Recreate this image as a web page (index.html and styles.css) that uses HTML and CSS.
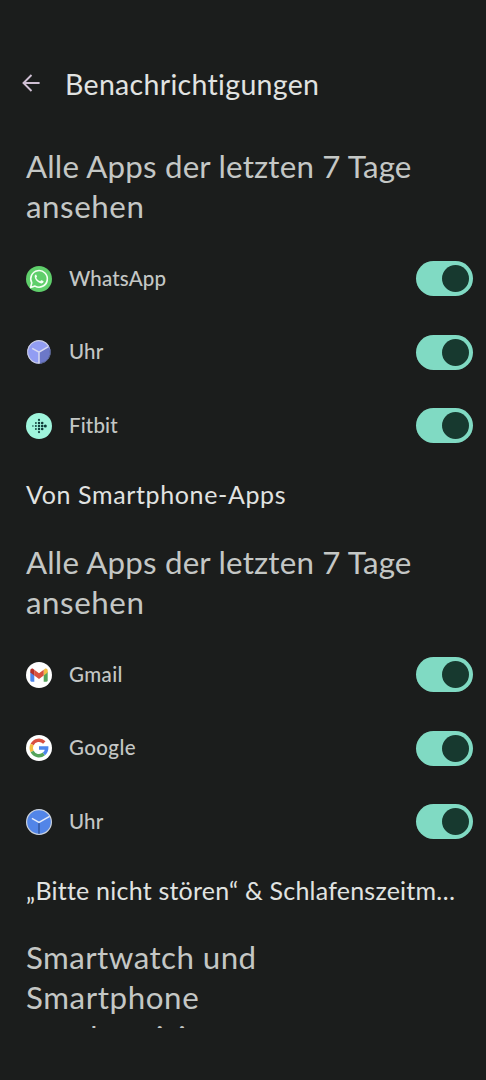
FILE: index.html
```html
<!DOCTYPE html>
<html lang="de">
<head>
    <meta charset="UTF-8">
    <meta name="viewport" content="width=device-width, initial-scale=1.0">
    <title>Benachrichtigungen</title>
    <link rel="stylesheet" href="styles.css">
</head>
<body>
    <header class="topbar">
        <svg class="back" viewBox="0 0 18 18">
            <path d="M17.6 9H1.5M9.5 1l-8 8 8 8" fill="none" stroke="#cfbfd3" stroke-width="1.9"/>
        </svg>
        <h1>Benachrichtigungen</h1>
    </header>

    <main class="content">
        <a class="link"><span class="line-all">Alle Apps der letzten 7 Tage</span> <span class="line-see">ansehen</span></a>
        <ul class="apps">
            <li class="app">
                <svg class="icon" viewBox="0 0 26 26">
                    <circle cx="13" cy="13" r="13" fill="#5fcf6b"/>
                    <path d="M4.6 21.4l1.2-4.5a8.3 8.3 0 1 1 3.2 3.2z" fill="none" stroke="#f4fff4" stroke-width="1.6" stroke-linejoin="round"/>
                    <path d="M9.9 8.5c-.7.3-1.3 1-1.2 2 .2 3.3 3.3 6.4 6.5 6.9 1 .1 2-.4 2.3-1.3.2-.5.1-.9-.2-1.1l-1.7-.8c-.4-.2-.6 0-1.2.8-.2.3-.5.2-.8.1-1.5-.7-2.5-1.6-3.2-3-.1-.3 0-.4.5-1 .2-.3.2-.4.1-.7l-.7-1.6c-.1-.3-.2-.3-.4-.3z" fill="#f4fff4"/>
                </svg>
                <span class="name">WhatsApp</span>
                <span class="switch"></span>
            </li>
            <li class="app">
                <svg class="icon" viewBox="0 0 26 26">
                    <circle cx="13" cy="13" r="11.6" fill="#929df3"/>
                    <path d="M13 13.2l9.8-5.5a11.4 11.4 0 0 1-9.8 16.7z" fill="#6c78c8"/>
                    <path d="M24.2 10.5a11.6 11.6 0 0 1-9.5 13.9" fill="none" stroke="#525d85" stroke-width="1"/>
                    <path d="M13.5 24.2A11.3 11.3 0 1 1 22.5 7" fill="none" stroke="#cbcde2" stroke-width="1.2"/>
                    <path d="M6.2 9.3l6.8 3.9 9.5-5.5M13 13.2v11" fill="none" stroke="#d8daf1" stroke-width="1.5"/>
                </svg>
                <span class="name">Uhr</span>
                <span class="switch"></span>
            </li>
            <li class="app">
                <svg class="icon" viewBox="0 0 26 26">
                    <circle cx="13" cy="13" r="13" fill="#9ff5dc"/>
                    <g fill="#0e3b39">
                        <circle cx="6.9" cy="13" r=".8"/>
                        <circle cx="9.9" cy="10" r=".9"/>
                        <circle cx="9.9" cy="13" r="1"/>
                        <circle cx="9.9" cy="16" r=".9"/>
                        <circle cx="13" cy="6.9" r="1.1"/>
                        <circle cx="13" cy="10" r="1.2"/>
                        <circle cx="13" cy="13" r="1.2"/>
                        <circle cx="13" cy="16" r="1.2"/>
                        <circle cx="13" cy="19.1" r="1.1"/>
                        <circle cx="16.2" cy="10" r="1.3"/>
                        <circle cx="16.2" cy="13" r="1.3"/>
                        <circle cx="16.2" cy="16" r="1.3"/>
                        <circle cx="19.3" cy="13" r="1.5"/>
                    </g>
                </svg>
                <span class="name">Fitbit</span>
                <span class="switch"></span>
            </li>
        </ul>

        <h2 class="phone-apps">Von Smartphone-Apps</h2>
        <a class="link"><span class="line-all">Alle Apps der letzten 7 Tage</span> <span class="line-see">ansehen</span></a>
        <ul class="apps">
            <li class="app">
                <svg class="icon" viewBox="0 0 26 26">
                    <circle cx="13" cy="13" r="13" fill="#fff"/>
                    <path d="M4.3 9.5l4 3v7.2H5.5c-.7 0-1.2-.5-1.2-1.2z" fill="#4f86ec"/>
                    <path d="M17.7 12.5l4-3v9c0 .7-.5 1.2-1.2 1.2h-2.8z" fill="#55a45b"/>
                    <path d="M17.7 7.7l1-.7c1.3-1 3-.1 3 1.5v2l-4 3z" fill="#f2bd42"/>
                    <path d="M8.3 13.5V7.7l4.7 3.5 4.7-3.5v5.8L13 17z" fill="#d95040"/>
                    <path d="M4.3 10.5v-2c0-1.6 1.7-2.5 3-1.5l1 .7v5.8z" fill="#b5302a"/>
                </svg>
                <span class="name wide">Gmail</span>
                <span class="switch"></span>
            </li>
            <li class="app">
                <svg class="icon" viewBox="0 0 26 26">
                    <circle cx="13" cy="13" r="13" fill="#fff"/>
                    <g fill="none" stroke-width="3.4">
                        <path d="M6.1 9.5A7.7 7.7 0 0 1 18.3 7.4" stroke="#d95040"/>
                        <path d="M6.1 16.5a7.7 7.7 0 0 1 0-7" stroke="#f2bd42"/>
                        <path d="M17.9 18.9A7.7 7.7 0 0 1 6.1 16.5" stroke="#55a45b"/>
                        <path d="M13 13h7.7a7.7 7.7 0 0 1-2.8 5.9" stroke="#4f86ec"/>
                    </g>
                </svg>
                <span class="name wide">Google</span>
                <span class="switch"></span>
            </li>
            <li class="app">
                <svg class="icon" viewBox="0 0 26 26">
                    <circle cx="13" cy="13" r="12.4" fill="#5285e8" stroke="#cbd2dc" stroke-width="1.2"/>
                    <path d="M13 13.5v11.2" stroke="#34589f" stroke-width="1.5"/>
                    <path d="M5.9 9.4l7.1 4 10.6-6" fill="none" stroke="#e4ecfa" stroke-width="1.4"/>
                </svg>
                <span class="name">Uhr</span>
                <span class="switch"></span>
            </li>
        </ul>

        <h2 class="dnd">„Bitte nicht stören“ &amp; Schlafenszeitmodus</h2>
        <a class="link"><span class="line-watch">Smartwatch und</span> <span class="line-phone">Smartphone</span> <span class="line-sync">synchronisieren</span></a>
    </main>
</body>
</html>
```
FILE: styles.css
```css
* {
    box-sizing: border-box;
}
body {
    display: flex;
    flex-direction: column;
    height: 1080px;
    margin: 0;
    padding-bottom: 52px;
    background-color: #1b1d1c;
    color: #e1e3e1;
    font-family: Lato, "Open Sans", sans-serif;
    font-variant-ligatures: none;
    overflow: hidden;
}
h1, h2, ul {
    margin: 0;
    padding: 0;
    font-weight: 400;
}
.topbar {
    display: flex;
    align-items: center;
    flex: none;
    gap: 25px;
    height: 146px;
    padding: 21px 22px 0 22px;
}
.back {
    width: 18px;
    height: 18px;
    margin-bottom: 2px;
}
h1 {
    font-size: 28.5px;
    line-height: 36px;
    letter-spacing: 0.32px;
}
.content {
    flex: 1;
    min-height: 0;
    overflow: hidden;
}
.link {
    display: block;
    padding: 0 26px 16px;
    color: #c4c7c5;
    font-size: 31.3px;
    line-height: 40px;
}
.link span {
    display: block;
    width: max-content;
}
.line-all {
    letter-spacing: 0.18px;
}
.line-see {
    letter-spacing: 0.55px;
}
.line-watch {
    letter-spacing: 0.45px;
}
.line-phone,
.line-sync {
    letter-spacing: 0.6px;
}
.apps {
    list-style: none;
}
.app {
    display: flex;
    align-items: center;
    height: 73.6px;
    padding: 0 13px 0 26px;
}
.icon {
    flex: none;
    width: 26px;
    height: 26px;
}
.name {
    flex: 1;
    margin-left: 17px;
    padding-bottom: 2px;
    color: #c4c7c5;
    font-size: 20.5px;
    font-weight: 500;
    line-height: 28px;
    letter-spacing: 0.15px;
}
.wide {
    letter-spacing: 0.4px;
}
.switch {
    display: flex;
    align-items: center;
    justify-content: flex-end;
    width: 57px;
    height: 35px;
    padding: 0 4px;
    border-radius: 18px;
    background-color: #80dac3;
}
.switch::after {
    content: "";
    width: 27px;
    height: 27px;
    border-radius: 50%;
    background-color: #17392f;
}
h2 {
    height: 79px;
    padding: 15px 30px 0 26px;
    font-size: 25px;
    line-height: 32px;
    white-space: nowrap;
    overflow: hidden;
    text-overflow: ellipsis;
}
.phone-apps {
    letter-spacing: 0.63px;
}
.dnd {
    height: 78px;
    padding-right: 24px;
    letter-spacing: 0.22px;
}
```
